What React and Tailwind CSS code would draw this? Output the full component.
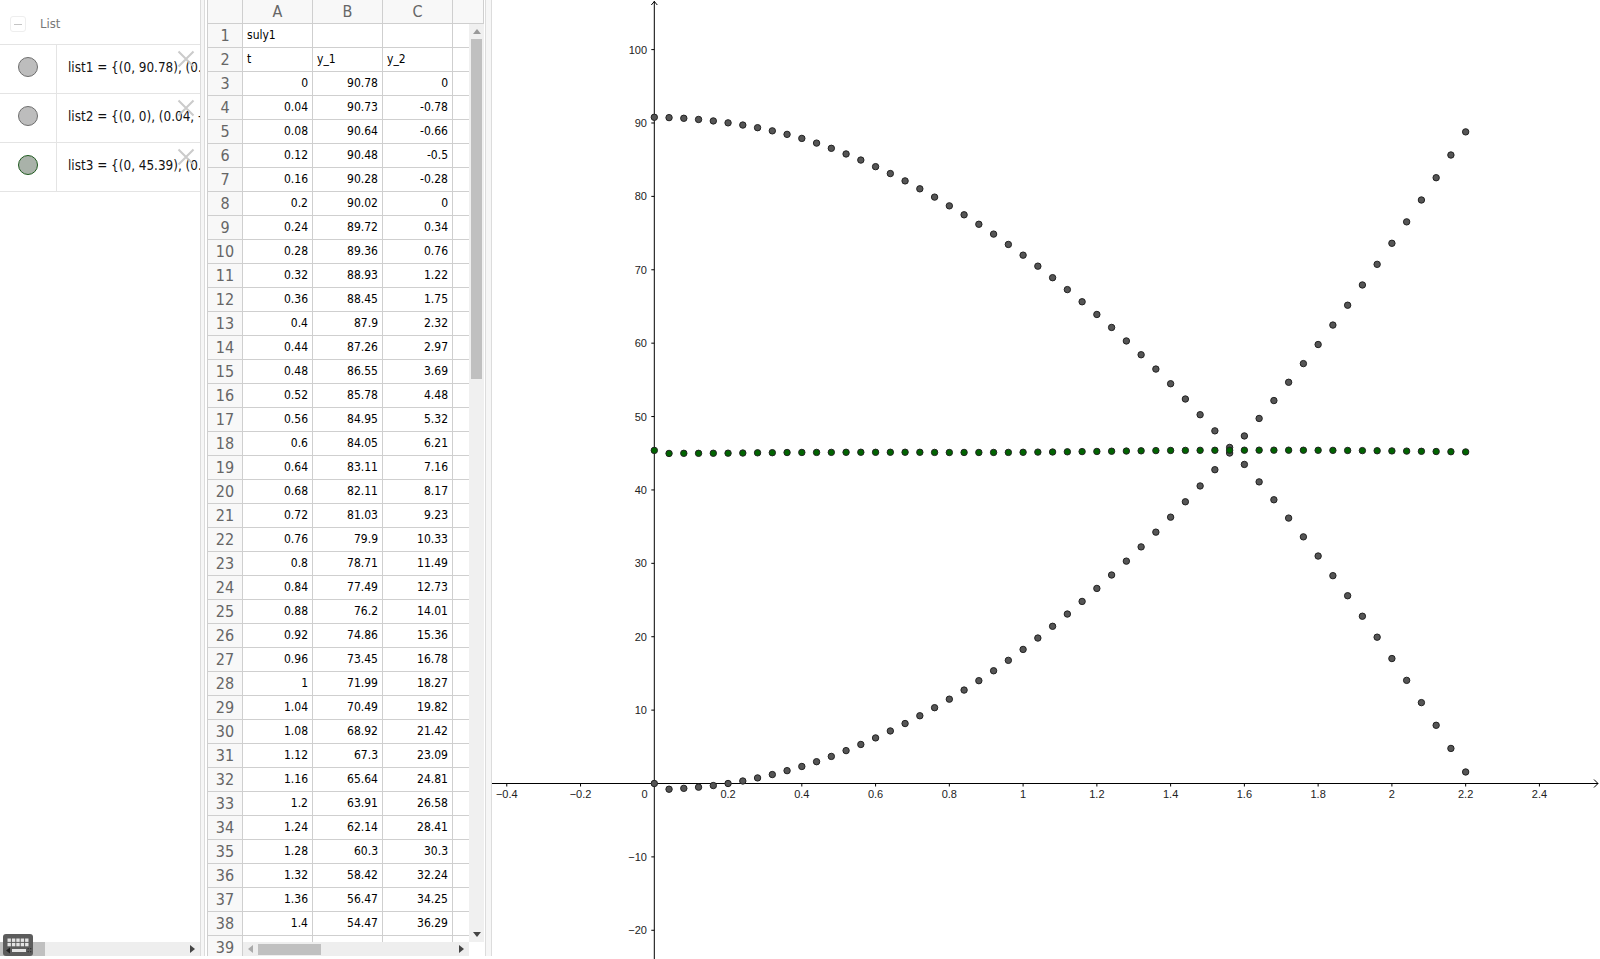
import React from "react";

const colB = [90.78,90.73,90.64,90.48,90.28,90.02,89.72,89.36,88.93,88.45,87.9,87.26,86.55,85.78,84.95,84.05,83.11,82.11,81.03,79.9,78.71,77.49,76.2,74.86,73.45,71.99,70.49,68.92,67.3,65.64,63.91,62.14,60.3,58.42,56.47,54.47];
const colC = [0,-0.78,-0.66,-0.5,-0.28,0,0.34,0.76,1.22,1.75,2.32,2.97,3.69,4.48,5.32,6.21,7.16,8.17,9.23,10.33,11.49,12.73,14.01,15.36,16.78,18.27,19.82,21.42,23.09,24.81,26.58,28.41,30.3,32.24,34.25,36.29];

// values below row 38 are off screen in the sheet, only the graph shows them
const y1 = [...colB];
const y2 = [...colC];
let tail = 36.29;
for (let i = 0; i < 20; i++) {
  y1.push(y1[y1.length - 1] - (2.08 + (i * 1.13) / 19));
  tail += 2.05 + (i * 1.15) / 19;
  y2.push(tail + 0.3 * Math.sin((Math.PI * (i + 1)) / 20));
}

const X0 = 654.3;
const Y0 = 783.5;
const px = (t) => X0 + t * 368.8;
const py = (v) => Y0 - v * 7.339;

const list1 = y1.map((v, i) => [i * 0.04, v]);
const list2 = y2.map((v, i) => [i * 0.04, v]);
const list3 = y1.map((v, i) => [i * 0.04, (v + y2[i]) / 2]);

const rows = colB.map((b, i) => ({
  n: i + 3,
  a: String(Math.round(i * 4) / 100),
  b: String(b),
  c: String(colC[i]),
}));

const algebra = [
  { text: "list1 = {(0, 90.78), (0.04, 90.73)}", marble: "bg-[#bdbdbd] border-[#6e6e6e]" },
  { text: "list2 = {(0, 0), (0.04, -0.78)}", marble: "bg-[#bdbdbd] border-[#6e6e6e]" },
  { text: "list3 = {(0, 45.39), (0.04, 44.97)}", marble: "bg-[#a9b2a9] border-[#1f5a1f]" },
];

const cell = "w-[70px] shrink-0 border-r border-b border-[#cfcfcf] px-1 leading-[23px] text-[12px] text-black";
const rowHead = "w-[36px] shrink-0 border-l border-r border-b border-[#cfcfcf] bg-[#f8f8f8] text-center text-[16px] leading-[24px] text-[#666]";

function SheetRow({ n, a, b, c, left }) {
  const align = left ? "text-left" : "text-right";
  return (
    <div className="flex h-6">
      <div className={rowHead}>{n}</div>
      <div className={`${cell} ${align}`}>{a}</div>
      <div className={`${cell} ${align}`}>{b}</div>
      <div className={`${cell} ${align}`}>{c}</div>
      <div className="flex-1 border-b border-[#cfcfcf]" />
    </div>
  );
}

function Dots({ points, fill }) {
  return points.map(([t, v], i) => (
    <circle key={i} cx={px(t)} cy={py(v)} r="3.2" fill={fill} stroke="#222" strokeWidth="1" />
  ));
}

function Graph() {
  const xTicks = [-0.4, -0.2, 0.2, 0.4, 0.6, 0.8, 1, 1.2, 1.4, 1.6, 1.8, 2, 2.2, 2.4];
  const yTicks = [-20, -10, 10, 20, 30, 40, 50, 60, 70, 80, 90, 100];
  return (
    <svg viewBox="492 0 1108 959" className="block h-[959px] w-full" fontFamily="'Liberation Sans', sans-serif" fontSize="11">
      <line x1="492" y1={Y0} x2="1598" y2={Y0} stroke="#000" />
      <line x1={X0} y1="1" x2={X0} y2="959" stroke="#000" />
      <path d={`M${X0 - 3} 5L${X0} 1.5L${X0 + 3} 5`} fill="none" stroke="#000" />
      <path d={`M1594 ${Y0 - 4}L1598 ${Y0}L1594 ${Y0 + 4}`} fill="none" stroke="#000" />
      {xTicks.map((t) => (
        <g key={t}>
          <line x1={px(t)} y1={Y0} x2={px(t)} y2={Y0 + 3} stroke="#000" />
          <text x={px(t)} y="798" textAnchor="middle" fill="#222">{String(t).replace("-", "\u2212")}</text>
        </g>
      ))}
      <text x="644.5" y="798" textAnchor="middle" fill="#222">0</text>
      {yTicks.map((v) => (
        <g key={v}>
          <line x1={X0 - 3} y1={py(v)} x2={X0} y2={py(v)} stroke="#000" />
          <text x="647" y={py(v) + 4} textAnchor="end" fill="#222">{String(v).replace("-", "\u2212")}</text>
        </g>
      ))}
      <Dots points={list1} fill="#555" />
      <Dots points={list2} fill="#555" />
      <Dots points={list3} fill="#006400" />
    </svg>
  );
}

function Keyboard() {
  const keys = [];
  for (let r = 0; r < 2; r++) {
    for (let c = 0; c < 5; c++) {
      keys.push(<rect key={`${r}${c}`} x={4.5 + c * 4.4} y={4.5 + r * 4.4} width="3.4" height="3.4" fill="#e4e4e4" />);
    }
  }
  return (
    <svg viewBox="0 0 30 22" className="absolute bottom-0 left-[3px] h-[22px] w-[30px]">
      <rect width="30" height="22" rx="3" fill="#5c5c5c" />
      {keys}
      <rect x="9" y="15" width="14" height="3" fill="#e4e4e4" />
      <path d="M7 13.5v6l-4-3z" fill="#222" />
      <path d="M24.5 14h1.3v1.3h-1.3zM27 14h1.3v1.3H27zM24.5 17h1.3v1.3h-1.3zM27 17h1.3v1.3H27z" fill="#333" />
    </svg>
  );
}

export default function App() {
  return (
    <div className="flex h-[959px] w-[1600px] overflow-hidden bg-white font-['DejaVu_Sans_Condensed','DejaVu_Sans',sans-serif]">
      {/* Algebra view */}
      <div className="relative flex h-[956px] w-[200px] shrink-0 flex-col">
        <div className="flex h-[45px] shrink-0 items-center border-b border-[#e4e4e4] pl-[10px] pt-[4px]">
          <div className="flex h-4 w-4 items-center justify-center rounded-[3px] border border-[#eeeeee]">
            <div className="h-px w-2 bg-[#c4c4c4]" />
          </div>
          <span className="ml-[14px] text-[13px] text-[#777]">List</span>
        </div>
        {algebra.map((row) => (
          <div key={row.text} className="relative flex h-[49px] shrink-0 items-center overflow-hidden border-b border-[#e4e4e4]">
            <div className="flex h-full w-[57px] shrink-0 items-center justify-center border-r border-[#e4e4e4] pb-[4px]">
              <div className={`h-5 w-5 rounded-full border ${row.marble}`} />
            </div>
            <div className="ml-[11px] whitespace-nowrap pb-[2px] text-[13.4px] text-[#111]">{row.text}</div>
            <svg viewBox="0 0 18 18" className="absolute right-[5px] top-[5px] h-[18px] w-[18px]">
              <path d="M1.5 1.5L16.5 16.5M16.5 1.5L1.5 16.5" stroke="#c6c6c6" strokeWidth="2" opacity="0.9" />
            </svg>
          </div>
        ))}
        <div className="mt-auto flex h-[14px] shrink-0 items-center bg-[#eeeeee]">
          <div className="h-full w-[45px] bg-[#c0c0c0]" />
          <div className="ml-auto mr-[5px] h-0 w-0 border-y-[4px] border-l-[5px] border-y-transparent border-l-[#444]" />
        </div>
        <Keyboard />
      </div>

      <div className="h-[956px] w-[5px] shrink-0 border-x border-[#dcdcdc] bg-[#f6f6f6]" />

      {/* Spreadsheet view */}
      <div className="ml-[2px] flex h-[956px] w-[277px] shrink-0 flex-col overflow-hidden">
        <div className="flex h-6 shrink-0 text-center text-[16px] leading-[24px] text-[#666]">
          <div className="w-[36px] border-l border-r border-b border-[#cfcfcf] bg-[#f8f8f8]" />
          {["A", "B", "C"].map((h) => (
            <div key={h} className="w-[70px] border-r border-b border-[#cfcfcf] bg-[#f8f8f8]">{h}</div>
          ))}
          <div className="flex-1 border-r border-b border-[#cfcfcf] bg-[#f8f8f8]" />
        </div>
        <div className="flex min-h-0 flex-1">
          <div className="relative w-[262px] shrink-0 overflow-hidden">
            <SheetRow n={1} a="suly1" b="" c="" left />
            <SheetRow n={2} a="t" b="y_1" c="y_2" left />
            {rows.map((r) => (
              <SheetRow key={r.n} {...r} />
            ))}
            <SheetRow n={39} a="" b="" c="" />
            {/* horizontal scrollbar sits over the last row */}
            <div className="absolute bottom-0 left-[36px] right-0 flex h-[14px] items-center bg-[#eeeeee]">
              <div className="ml-[5px] h-0 w-0 border-y-[4px] border-r-[5px] border-y-transparent border-r-[#aaa]" />
              <div className="ml-[5px] h-[11px] w-[63px] bg-[#c0c0c0]" />
              <div className="ml-auto mr-[5px] h-0 w-0 border-y-[4px] border-l-[5px] border-y-transparent border-l-[#444]" />
            </div>
          </div>
          <div className="flex h-[918px] w-[15px] shrink-0 flex-col items-center bg-[#f0f0f0]">
            <div className="mt-[5px] h-0 w-0 border-x-[4px] border-b-[5px] border-x-transparent border-b-[#999]" />
            <div className="mt-[5px] h-[340px] w-[11px] bg-[#c0c0c0]" />
            <div className="mb-[5px] mt-auto h-0 w-0 border-x-[4px] border-t-[5px] border-x-transparent border-t-[#444]" />
          </div>
        </div>
      </div>

      <div className="ml-px h-[956px] w-[7px] shrink-0 border-x border-[#dcdcdc] bg-[#f6f6f6]" />

      {/* Graphics view */}
      <div className="min-w-0 flex-1">
        <Graph />
      </div>
    </div>
  );
}
